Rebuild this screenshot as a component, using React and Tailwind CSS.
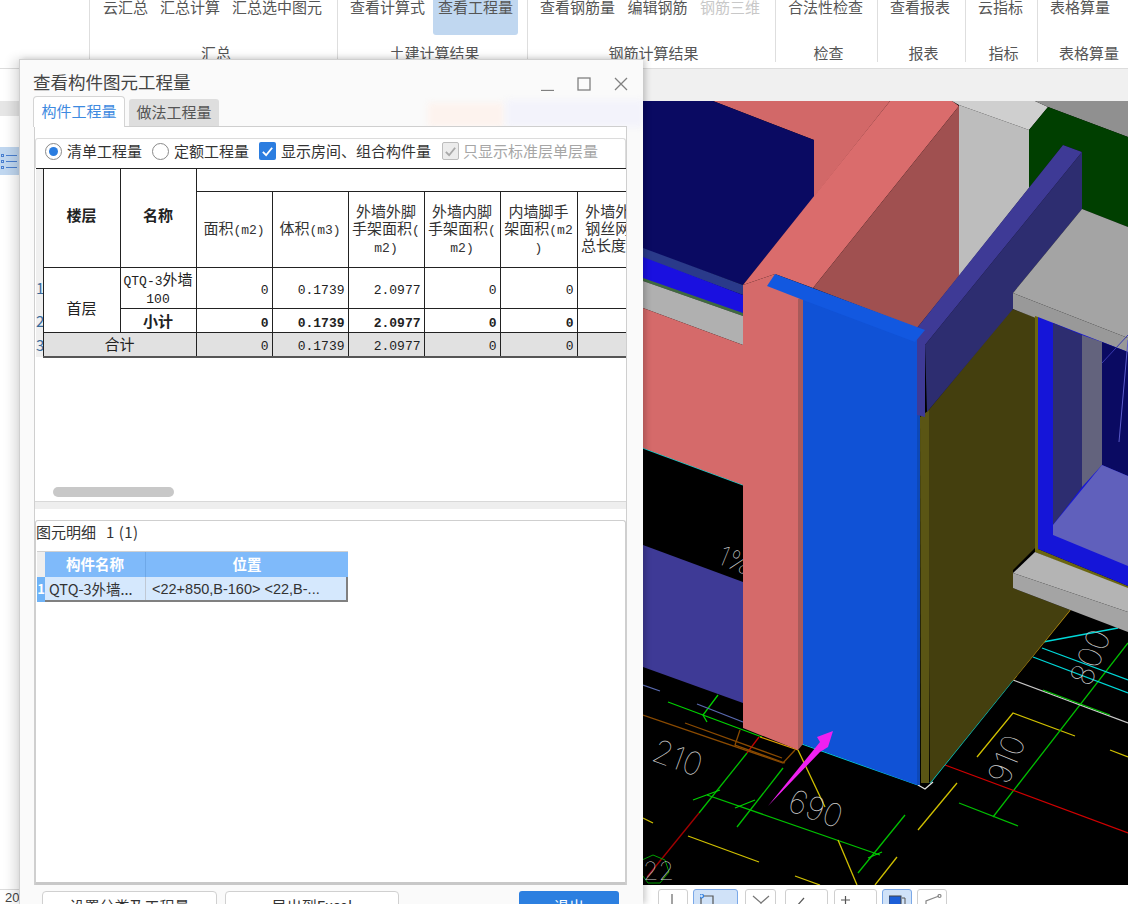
const polys = [
  ["#d26868", "713,101 890,101 814,197 814,140"],
  ["#0a0a62", "643,101 713,101 814,140 814,197 743,285 643,249"],
  ["#2a3a8a", "643,248 743,285 743,295 643,258"],
  ["#1a10e0", "643,257 743,295 743,314 643,279"],
  ["#3f6a3f", "643,278 743,313 743,316 643,281"],
  ["#b0b0b0", "643,281 743,316 743,345 643,308"],
  ["#d56a6a", "643,308 743,345 743,485 643,448"],
  ["#3e3a96", "643,545 743,582 743,703 643,667"],
  ["#da6c6c", "890,101 952,101 959,106 813,288 775,274 743,285"],
  ["#a05050", "959,106 959,276 917,328 813,288"],
  ["#d56a6a", "743,285 775,274 803,290 803,299 798,299 798,750 743,728"],
  ["#a85a5a", "798,299 803,297 803,744 798,750"],
  ["#1052d6", "803,296 917,338 917,785 803,744"],
  ["#0d48b8", "917,340 920,341 920,785 917,785"],
  ["#bdbdbd", "959,105 1029,130 1029,188 959,276"],
  ["#cfcfcf", "952,101 1035,101 1048,107 1029,130 959,105"],
  ["#909090", "1035,101 1128,101 1128,137 1048,107"],
  ["#003f00", "1048,107 1128,137 1128,227 1082,209 1082,152 1063,145 1029,188 1029,130"],
  ["#443f0e", "927,412 1012,309 1035,317 1035,548 1013,570 1013,588 1070,610 930,783"],
  ["#5a5514", "920,417 929,410 929,783 921,783"],
  ["#2d2d70", "1082,152 1082,209 1013,293 1013,309 927,412 925,345"],
  ["#3e3a96", "1063,145 1082,152 925,345 925,417 917,415 917,328"],
  ["#1258e0", "775,274 925,330 915,342 803,300 767,286"],
  ["#a4a4a4", "1082,209 1128,227 1128,338 1013,293"],
  ["#999999", "1013,293 1128,338 1128,354 1013,309"],
  ["#6b6610", "1035,316 1038,317 1038,549 1128,586 1128,590 1035,552"],
  ["#1515d8", "1038,317 1128,352 1128,586 1038,549"],
  ["#2d2d70", "1053,323 1082,335 1082,487 1053,525"],
  ["#63637d", "1082,335 1102,342 1102,465 1082,487"],
  ["#0a0a62", "1102,342 1128,352 1128,476 1102,465"],
  ["#6060bc", "1053,525 1102,465 1128,476 1128,566 1053,535"],
  ["#b4b4b4", "1013,573 1035,552 1128,588 1128,612"],
  ["#a4a4a4", "1013,573 1128,612 1128,632 1013,588"],
];
const lines = [
  ["#00d000", "668,702 762,737"], ["#00d000", "718,695 703,715 707,722"], ["#00c000", "747,753 699,813"],
  ["#c00000", "759,737 747,753"], ["#a00000", "699,813 647,877"], ["#00c000", "783,768 737,827"],
  ["#00c000", "707,795 880,855"], ["#00c000", "905,815 858,873"], ["#d0c000", "838,840 857,885"],
  ["#d0c000", "897,857 875,885"], ["#d0c000", "798,750 825,807"], ["#d0c000", "688,836 759,862"],
  ["#d0c000", "795,876 820,885"], ["#d0c000", "643,818 653,823"], ["#d0c000", "918,830 957,783"],
  ["#d0c000", "977,757 1013,713 1075,736"], ["#d0c000", "1110,750 1128,757"], ["#00c000", "959,803 1018,826"],
  ["#00c000", "993,817 1128,643"], ["#c8c8c8", "1013,680 1128,723"], ["#00c000", "1043,690 1110,715"],
  ["#d00000", "945,765 1128,833"], ["#00d8d8", "802,744 918,785"], ["#00d8d8", "930,783 1013,680"],
  ["#00d8d8", "1043,642 1118,628"], ["#00d8d8", "1042,648 1128,680"], ["#00d8d8", "1033,657 1128,693"],
  ["#c89a10", "1013,680 1070,610"], ["#8a4a00", "643,715 783,763 795,750"], ["#8a4a00", "685,723 782,758"],
  ["#8a4a00", "740,730 735,745 785,763"], ["#5a6ab0", "697,704 743,722"], ["#5a6ab0", "643,685 660,691"],
  ["#e0e0e0", "918,785 925,789 933,782"], ["#e0a000", "760,737 798,750"], ["#00d8d8", "643,448 743,485"],
  ["#00d000", "693,800 720,790"], ["#00d000", "735,808 755,800"], ["#00d000", "868,858 882,852"],
];
const cadText = "fill-[#cfcfcf] font-['Inter',sans-serif] font-thin";

function Scene() {
  return (
    <svg viewBox="643 101 485 784" className="block w-[485px] h-[784px] bg-black">
      {lines.map(([c, p], i) => <polyline key={i} points={p} fill="none" stroke={c} strokeWidth="1.3" />)}
      <polygon points="653,855 665,860 669,872 660,883 648,883 640,872 642,860" fill="none" stroke="#00a000" strokeWidth="1" />
      <text x="643" y="880" fontSize="25" className={cadText}>22</text>
      <text x="0" y="0" fontSize="32" transform="translate(650,760) rotate(20)" className={cadText}>210</text>
      <text x="0" y="0" fontSize="32" transform="translate(786,810) rotate(20)" className={cadText}>690</text>
      <text x="0" y="0" fontSize="32" transform="translate(1008,786) rotate(-68)" className={cadText}>910</text>
      <text x="0" y="0" fontSize="32" transform="translate(1090,688) rotate(-68)" className={cadText}>800</text>
      <text x="0" y="0" fontSize="27" transform="translate(716,563) rotate(22)" className={cadText}>1%</text>
      {polys.map(([c, p], i) => <polygon key={i} points={p} fill={c} />)}
      <polyline points="1102,363 1128,335" fill="none" stroke="#3a3ab0" strokeWidth="1" />
      <polyline points="1119,442 1128,340" fill="none" stroke="#5a5ac8" strokeWidth="1" />
      <polygon points="768,806 820,742 817,737 833,731 828,747 820,752" fill="#f020f0" />
    </svg>
  );
}

function Group({ w, pl, gap, label, children, last }) {
  return (
    <div className={`${w} ${pl} h-[62px] flex flex-col shrink-0 ${last ? "" : "border-r border-[#dedede]"}`}>
      <div className={`h-[35px] flex items-start ${gap}`}>{children}</div>
      <div className="mt-[9px] leading-[18px] text-center -ml-[8px] text-[15px] text-[#555]">{label}</div>
    </div>
  );
}

function RB({ t, off }) {
  return <span className={`text-[15px] leading-[14px] whitespace-nowrap ${off ? "text-[#c8c8c8]" : "text-[#555]"}`}>{t}</span>;
}

function M({ children, b }) {
  return <span className={`font-['Liberation_Mono',monospace] text-[13px] leading-none ${b ? "font-bold" : ""}`}>{children}</span>;
}

const cell = "border border-[#222] p-0 text-center";
const num = "border border-[#222] py-0 pl-0 pr-[3px] text-right";
const idx = "bg-[#f0f0f0] border-r border-[#222] p-0 text-[15px] text-[#3a6a9a] overflow-hidden text-left";

function Head({ children }) {
  return <th className={`${cell} pb-[3px] font-normal leading-[17px] text-[15px] text-[#333]`}>{children}</th>;
}

function Nums({ vals, b }) {
  return vals.map((v, i) => (
    <td key={i} className={num}><M b={b}>{v}</M></td>
  ));
}

function QtyTable() {
  return (
    <div className="h-[332px] w-[590px] overflow-hidden ml-[1px] text-[#222]">
      <table className="table-fixed w-[617px] border-collapse text-[15px] leading-[18px]">
        <colgroup>
          <col className="w-[7px]" />
          <col className="w-[77px]" />
          <col className="w-[76px]" />
          <col className="w-[76px]" />
          <col className="w-[76px]" />
          <col className="w-[76px]" />
          <col className="w-[76px]" />
          <col className="w-[77px]" />
          <col className="w-[76px]" />
        </colgroup>
        <thead>
          <tr className="h-[23px]">
            <th className="bg-[#f0f0f0] border-t border-[#222] border-r p-0" rowSpan={2}></th>
            <th className={`${cell} font-bold pb-[6px]`} rowSpan={2}>楼层</th>
            <th className={`${cell} font-bold pb-[6px]`} rowSpan={2}>名称</th>
            <th className="border border-[#222] border-r-0 p-0" colSpan={6}></th>
          </tr>
          <tr className="h-[76px]">
            <Head>面积<M>(m2)</M></Head>
            <Head>体积<M>(m3)</M></Head>
            <Head>外墙外脚<br />手架面积<M>(</M><br /><M>m2)</M></Head>
            <Head>外墙内脚<br />手架面积<M>(</M><br /><M>m2)</M></Head>
            <Head>内墙脚手<br />架面积<M>(m2</M><br /><M>)</M></Head>
            <th className={`${cell} pb-[3px] font-normal leading-[17px] text-[15px] text-[#333] whitespace-nowrap border-r-0`}>外墙外挂<br />钢丝网片<br />总长度<M>(m)</M></th>
          </tr>
        </thead>
        <tbody>
          <tr className="h-[41px]">
            <td className={idx}>1</td>
            <td className={`${cell} pt-[16px]`} rowSpan={2}>首层</td>
            <td className={cell}><M>QTQ-3</M>外墙<br /><M>100</M></td>
            <Nums vals={["0", "0.1739", "2.0977", "0", "0"]} />
            <td className={num}></td>
          </tr>
          <tr className="h-[24px]">
            <td className={idx}>2</td>
            <td className={`${cell} font-bold`}>小计</td>
            <Nums vals={["0", "0.1739", "2.0977", "0", "0"]} b />
            <td className={num}></td>
          </tr>
          <tr className="h-[24px] bg-[#e1e1e1]">
            <td className={idx}>3</td>
            <td className={`${cell} border-b-2 border-b-[#555]`} colSpan={2}>合计</td>
            {["0", "0.1739", "2.0977", "0", "0", ""].map((v, i) => (
              <td key={i} className={`${num} border-b-2 border-b-[#555]`}><M>{v}</M></td>
            ))}
          </tr>
        </tbody>
      </table>
    </div>
  );
}

function Radio({ on }) {
  return (
    <span className="w-[17px] h-[17px] rounded-full border border-[#8a8a8a] bg-white flex items-center justify-center shrink-0">
      {on && <span className="w-[9px] h-[9px] rounded-full bg-[#2b7de0]" />}
    </span>
  );
}

function Check({ off }) {
  return (
    <span className={`w-[17px] h-[18px] rounded-[2px] flex items-center justify-center shrink-0 ${off ? "bg-[#ececec] border border-[#bdbdbd]" : "bg-[#2b7de0]"}`}>
      <svg viewBox="0 0 14 14" className="w-[13px] h-[13px]" fill="none" stroke={off ? "#a8a8a8" : "#fff"} strokeWidth="2">
        <path d="M2 7.5 L5.5 11 L12 3" />
      </svg>
    </span>
  );
}

function Dialog() {
  return (
    <div className="absolute left-[19px] top-[59px] w-[624px] h-[845px] bg-[#fafafa] border-t border-l border-[#cfcfcf] shadow-[-6px_0_10px_rgba(0,0,0,0.12),3px_0_6px_rgba(0,0,0,0.18)] overflow-hidden text-[15px] text-[#333]">
      <div className="absolute left-[408px] top-[43px] w-[76px] h-[24px] bg-[#fdf3ee] blur-[3px]" />
      <div className="absolute left-[486px] top-[40px] w-[138px] h-[27px] bg-[#f3f3fb] blur-[3px]" />
      <div className="relative h-[35px] flex items-end pl-[13px] pr-[15px] pb-[1px]">
        <span className="text-[17.5px] leading-[24px] text-[#444]">查看构件图元工程量</span>
        <div className="ml-auto flex items-center gap-[23px] pb-[3px]">
          <svg width="13" height="14" viewBox="0 0 13 14" fill="none" stroke="#808080" strokeWidth="1.3"><path d="M0 13.5H13" /></svg>
          <svg width="14" height="14" viewBox="0 0 14 14" fill="none" stroke="#808080" strokeWidth="1.3"><rect x="1" y="1" width="12" height="12" /></svg>
          <svg width="14" height="14" viewBox="0 0 14 14" fill="none" stroke="#808080" strokeWidth="1.3"><path d="M1 1L13 13M13 1L1 13" /></svg>
        </div>
      </div>
      <div className="relative h-[31px] flex items-end pl-[13px] gap-[4px]">
        <div className="w-[92px] h-[31px] bg-white border border-b-0 border-[#d4d4d4] rounded-t-[4px] text-center leading-[27px] text-[#3d8ae0] relative z-10 -mb-[1px]">构件工程量</div>
        <div className="w-[90px] h-[27px] bg-[#dedede] rounded-t-[3px] text-center leading-[25px] text-[#555]">做法工程量</div>
      </div>
      <div className="relative ml-[14px] w-[593px] h-[759px] bg-white border border-[#cfcfcf] border-b-0 pt-[11px] flex flex-col">
        <div className="h-[30px] border border-b-0 border-[#dcdcdc] rounded-t-[3px] flex items-center pl-[9px] pb-[5px]">
          <Radio on />
          <span className="ml-[5px]">清单工程量</span>
          <span className="ml-[10px]"><Radio /></span>
          <span className="ml-[5px]">定额工程量</span>
          <span className="ml-[10px]"><Check /></span>
          <span className="ml-[5px]">显示房间、组合构件量</span>
          <span className="ml-[11px]"><Check off /></span>
          <span className="ml-[4px] text-[#a6a6a6]">只显示标准层单层量</span>
        </div>
        <QtyTable />
        <div className="relative h-0">
          <div className="absolute left-[18px] -top-[13px] w-[121px] h-[10px] rounded-full bg-[#c8c8c8]" />
        </div>
        <div className="h-[8px] mt-[1px] bg-[#eeeeee] border-t border-[#d8d8d8]" />
        <div className="h-[11px]" />
        <div className="flex-1 border-x border-[#cfcfcf] border-t border-b-[3px] border-b-[#c8c8c8] rounded-t-[3px] flex flex-col">
          <div className="h-[30px] leading-[22px] text-[15px] font-['Noto_Sans_CJK_SC','Liberation_Sans',sans-serif]">图元明细<span className="ml-[10px] tracking-[0.5px]">1 (1)</span></div>
          <div className="ml-[1px] w-[311px] text-[14.5px]">
            <div className="flex h-[26px] border-t border-[#d0d0d0]">
              <div className="w-[8px] bg-[#eeeeee]" />
              <div className="w-[101px] bg-[#7fbafa] border-r border-[#6ea8e8] text-white font-bold text-center leading-[23px]">构件名称</div>
              <div className="w-[202px] bg-[#7fbafa] text-white font-bold text-center leading-[23px]">位置</div>
            </div>
            <div className="flex h-[25px]">
              <div className="w-[8px] h-[25px] bg-[#6fb3f7] text-white font-bold text-[13px] leading-[24px] text-center">1</div>
              <div className="flex flex-1 border-b-2 border-r-2 border-[#808080] bg-[#d5e8fd]">
                <div className="w-[101px] shrink-0 border-r border-[#c0c8d4] pl-[4px] leading-[24px] whitespace-nowrap overflow-hidden text-[#333]">QTQ-3外墙...</div>
                <div className="pl-[6px] leading-[24px] whitespace-nowrap overflow-hidden text-[#333] font-['Liberation_Sans','Noto_Sans_CJK_SC',sans-serif]">{"<22+850,B-160> <22,B-..."}</div>
              </div>
            </div>
          </div>
        </div>
      </div>
      <div className="flex pl-[22px] pt-[6px] text-[15px]">
        <div className="w-[175px] h-[30px] border border-[#d0d0d0] rounded-[4px] bg-white text-center leading-[28px]">设置分类及工程量</div>
        <div className="ml-[8px] w-[174px] h-[30px] border border-[#d0d0d0] rounded-[4px] bg-white text-center leading-[28px] font-['Noto_Sans_CJK_SC','Liberation_Sans',sans-serif]">导出到Excel</div>
        <div className="ml-[120px] w-[100px] h-[30px] rounded-[3px] bg-[#2c7fe0] text-white text-center leading-[30px]">退出</div>
      </div>
    </div>
  );
}

function ToolBtn({ w, on, children }) {
  return (
    <div className={`${w} h-[26px] shrink-0 rounded-[3px] border flex items-start justify-start pl-[6px] pt-[4px] ${on ? "bg-[#d0e2f8] border-[#7aa8e8]" : "bg-white border-[#cfcfcf]"}`}>
      {children}
    </div>
  );
}

function Toolbar() {
  return (
    <div className="h-[19px] bg-white pl-[15px] pt-[4px] flex items-start overflow-hidden">
      <ToolBtn w="w-[30px] mr-[5px]">
        <svg width="18" height="14" fill="none" stroke="#666" strokeWidth="1.2"><path d="M7 0V14" /></svg>
      </ToolBtn>
      <ToolBtn w="w-[45px] mr-[7px]" on>
        <svg width="32" height="14" fill="none" stroke="#555" strokeWidth="1.2"><circle cx="1.5" cy="2" r="2" stroke="#2b7de0" /><path d="M4 2H13V14" /><path d="M1 4V14" /><path d="M26 11H31" strokeWidth="2" /></svg>
      </ToolBtn>
      <ToolBtn w="w-[31px] mr-[9px]">
        <svg width="20" height="14" fill="none" stroke="#777" strokeWidth="1.2"><path d="M1 2L9 9L17 2M9 9V14" /></svg>
      </ToolBtn>
      <ToolBtn w="w-[43px] mr-[6px]">
        <svg width="32" height="14" fill="none" stroke="#555" strokeWidth="1.2"><path d="M4 13L12 4" /><path d="M25 11H31" strokeWidth="2" /></svg>
      </ToolBtn>
      <ToolBtn w="w-[43px] mr-[5px]">
        <svg width="32" height="14" fill="none" stroke="#555" strokeWidth="1.2"><path d="M0 6H9M4.5 2V14" /><path d="M25 11H31" strokeWidth="2" /></svg>
      </ToolBtn>
      <ToolBtn w="w-[30px] mr-[5px]" on>
        <svg width="18" height="14" fill="none"><rect x="0" y="2" width="12" height="12" fill="#1c5fd8" stroke="#444" /><path d="M13 4H16V14" stroke="#555" /></svg>
      </ToolBtn>
      <ToolBtn w="w-[30px]">
        <svg width="18" height="14" fill="none" stroke="#888" strokeWidth="1.2"><path d="M2 14V7L15 2" /><circle cx="15.5" cy="2" r="1.5" /></svg>
      </ToolBtn>
    </div>
  );
}

function LeftStrip() {
  return (
    <div className="w-[643px] h-[803px] shrink-0 bg-white flex flex-col">
      <div className="h-[15px] bg-[#e6e6e6] w-[20px]" />
      <div className="h-[31px]" />
      <div className="h-[28px] w-[20px] bg-[#c0d7f0] flex flex-col justify-center gap-[3px] pl-[1px]">
        <div className="flex items-center gap-[2px]"><span className="w-[3px] h-[3px] border border-[#4a7fd0]" /><span className="w-[11px] h-[1px] bg-[#4a7fd0]" /></div>
        <div className="flex items-center gap-[2px]"><span className="w-[3px] h-[3px] border border-[#4a7fd0]" /><span className="w-[11px] h-[1px] bg-[#4a7fd0]" /></div>
        <div className="flex items-center gap-[2px]"><span className="w-[3px] h-[3px] border border-[#4a7fd0]" /><span className="w-[11px] h-[1px] bg-[#4a7fd0]" /></div>
      </div>
      <div className="mt-auto h-[15px] border-t border-[#dcdcdc] w-[20px] pl-[5px] text-[13px] leading-[16px] text-[#444] font-['Liberation_Sans',sans-serif]">20</div>
    </div>
  );
}

export default function App() {
  return (
    <div className="relative w-[1128px] h-[904px] overflow-hidden bg-white font-['Noto_Sans_CJK_SC','Liberation_Sans',sans-serif]">
      <div className="flex h-[62px] bg-white">
        <div className="w-[90px] shrink-0 border-r border-[#dedede]" />
        <Group w="w-[248px]" pl="pl-[13px]" gap="gap-[12px]" label="汇总">
          <RB t="云汇总" /><RB t="汇总计算" /><RB t="汇总选中图元" />
        </Group>
        <Group w="w-[190px]" pl="pl-[12px]" gap="gap-[8px]" label="土建计算结果">
          <RB t="查看计算式" />
          <div className="h-[35px] px-[5px] bg-[#c0d7f0] rounded-b-[3px] flex items-start"><RB t="查看工程量" /></div>
        </Group>
        <Group w="w-[248px]" pl="pl-[12px]" gap="gap-[12.5px]" label="钢筋计算结果">
          <RB t="查看钢筋量" /><RB t="编辑钢筋" /><RB t="钢筋三维" off />
        </Group>
        <Group w="w-[102px]" pl="pl-[12px]" gap="" label="检查"><RB t="合法性检查" /></Group>
        <Group w="w-[88px]" pl="pl-[12px]" gap="" label="报表"><RB t="查看报表" /></Group>
        <Group w="w-[72px]" pl="pl-[12px]" gap="" label="指标"><RB t="云指标" /></Group>
        <Group w="w-[98px]" pl="pl-[12px]" gap="" label="表格算量" last><RB t="表格算量" /></Group>
      </div>
      <div className="h-[7px] bg-white border-b border-[#dcdcdc]" />
      <div className="h-[32px] bg-[#f0f0f0]">
        <div className="h-[32px] w-[20px] bg-white" />
      </div>
      <div className="flex">
        <LeftStrip />
        <div className="w-[485px] shrink-0">
          <Scene />
          <Toolbar />
        </div>
      </div>
      <Dialog />
    </div>
  );
}
